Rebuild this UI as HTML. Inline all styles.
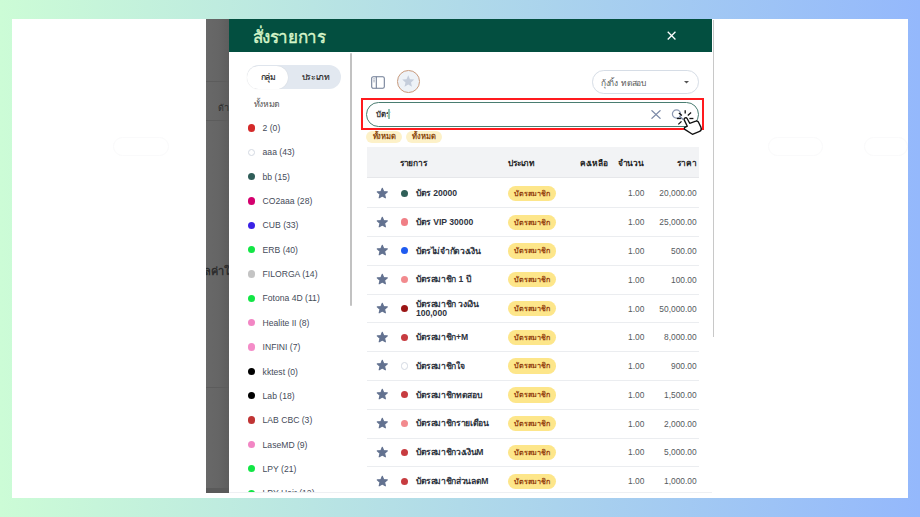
<!DOCTYPE html>
<html><head><meta charset="utf-8">
<style>
*{box-sizing:border-box;margin:0;padding:0}
html,body{width:920px;height:517px;overflow:hidden}
body{position:relative;background:linear-gradient(to right,#ccfcd6,#94b8fc);font-family:"Liberation Sans",sans-serif;}
.a{position:absolute}
.card{left:12px;top:19px;width:896px;height:479px;background:#fff}
.ov{left:206px;top:19px;width:23px;height:474px;background:linear-gradient(to right,#686868 0%,#656565 55%,#5d5d5d 100%);overflow:hidden}
.modal{left:229px;top:19px;width:483px;height:474px;background:#fff;overflow:hidden}
.hdr{left:0;top:0;width:483px;height:33px;background:#034f40}
.title{left:23.5px;top:6px;font-size:17px;-webkit-text-stroke:0.4px #d6f5c9;letter-spacing:-0.35px;color:#d6f5c9;line-height:26px;white-space:nowrap}
.tog{left:17.6px;top:46.1px;width:94px;height:24.3px;border-radius:12.2px;background:#e2e8f0}
.tog .w{left:0.6px;top:0.6px;width:41px;height:23.1px;border-radius:11.6px;background:#fff;box-shadow:0 0 1px rgba(0,0,0,.15)}
.tt{font-size:8.6px;-webkit-text-stroke:0.15px #222;color:#222;letter-spacing:-0.35px;line-height:12px;white-space:nowrap}
.si{font-size:8.6px;color:#454b59;line-height:12px;white-space:nowrap}
.dot{width:7.2px;height:7.2px;border-radius:50%}
.thumb{left:121px;top:34px;width:2.4px;height:253px;border-radius:1.2px;background:#c2c2c2}
.red{left:132px;top:78.7px;width:343.3px;height:32.2px;border:2px solid #ff1a1e}
.search{left:136.7px;top:82.7px;width:333.5px;height:24.9px;border:1.9px solid #4a7d71;border-radius:12.5px}
.tag{height:11.6px;width:35.5px;border-radius:6px;background:#fdf1c8;font-size:7.6px;font-weight:bold;color:#8b4a10;letter-spacing:-0.15px;text-align:center;line-height:11.6px;white-space:nowrap}
.th{left:137.5px;top:128.3px;width:332.1px;height:31.2px;background:#f2f3f5;border-bottom:1px solid #e6e7ea}
.hd{letter-spacing:-0.2px;font-size:8.4px;font-weight:bold;color:#1e1e1e;line-height:12px;white-space:nowrap}
.row{left:137.5px;width:332.1px;height:28.78px;border-bottom:1px solid #ebedf0}
.nm{font-size:8.6px;font-weight:bold;color:#2e3340;line-height:8.6px;white-space:nowrap}
.num{font-size:8.4px;color:#555a60;line-height:12px;white-space:nowrap;text-align:right}
.t{letter-spacing:-0.35px}
.badge{width:47.5px;height:15.3px;border-radius:7.7px;background:#fde68a;font-size:7.2px;font-weight:bold;color:#92400e;text-align:center;line-height:15.3px;white-space:nowrap}
</style></head><body>
<div class="a card"></div>
<div class="a" style="left:113px;top:137px;width:55.5px;height:19px;border-radius:9.5px;border:1.5px solid #fafafb"></div>
<div class="a" style="left:768px;top:137px;width:55px;height:19px;border-radius:9.5px;border:1.5px solid #fafafb"></div><div class="a" style="left:864px;top:137px;width:44px;height:19px;border-radius:9.5px;border:1.5px solid #fafafb"></div>
<div class="a ov">
  <div class="a" style="left:0;top:62px;width:23px;height:1px;background:#5c5c5c"></div>
  <div class="a" style="left:0;top:101px;width:23px;height:1px;background:#5c5c5c"></div>
  <div class="a" style="left:0;top:367.5px;width:23px;height:1px;background:#5c5c5c"></div>
  <div class="a" style="left:0;top:469px;width:23px;height:5px;background:#5a5a5a"></div>
  <div class="a" style="left:12px;top:82px;font-size:9px;color:#2c2c2c;white-space:nowrap">ด้านล่าง</div>
  <div class="a" style="left:-2px;top:243px;font-size:11px;font-weight:bold;color:#2c2c2c;white-space:nowrap">ลค่าใช้</div>
</div>
<div class="a" style="left:712.6px;top:19.6px;width:1.6px;height:317.5px;background:#c8c8c8"></div>
<div class="a modal">
  <div class="a hdr"></div>
  <div class="a title">สั่งรายการ</div>
  <svg class="a" style="left:438.3px;top:11.6px" width="9.2" height="9.2" viewBox="0 0 10 10"><path d="M0.8 0.8L9.2 9.2M9.2 0.8L0.8 9.2" stroke="#fff" stroke-width="1.4"/></svg>
  <div class="a tog"><div class="a w"></div>
    <div class="a tt" style="left:14px;top:6px">กลุ่ม</div>
    <div class="a tt" style="left:55px;top:6px">ประเภท</div>
  </div>
  <div class="a si" style="left:24.7px;top:79px;color:#555;font-size:8.6px"><span class="t">ทั้งหมด</span></div>
  <div class="a dot" style="left:18.70px;top:105.40px;background:#d42a2a;"></div>
  <div class="a si" style="left:33.6px;top:103.10px">2 (0)</div>
  <div class="a dot" style="left:18.70px;top:129.74px;background:#ffffff;border:1px solid #d3d9e2;"></div>
  <div class="a si" style="left:33.6px;top:127.44px">aaa (43)</div>
  <div class="a dot" style="left:18.70px;top:154.08px;background:#2f5d58;"></div>
  <div class="a si" style="left:33.6px;top:151.78px">bb (15)</div>
  <div class="a dot" style="left:18.70px;top:178.42px;background:#d4006e;"></div>
  <div class="a si" style="left:33.6px;top:176.12px">CO2aaa (28)</div>
  <div class="a dot" style="left:18.70px;top:202.76px;background:#3a22e6;"></div>
  <div class="a si" style="left:33.6px;top:200.46px">CUB (33)</div>
  <div class="a dot" style="left:18.70px;top:227.10px;background:#12e645;"></div>
  <div class="a si" style="left:33.6px;top:224.80px">ERB (40)</div>
  <div class="a dot" style="left:18.70px;top:251.44px;background:#c4c4c4;"></div>
  <div class="a si" style="left:33.6px;top:249.14px">FILORGA (14)</div>
  <div class="a dot" style="left:18.70px;top:275.78px;background:#12e645;"></div>
  <div class="a si" style="left:33.6px;top:273.48px">Fotona 4D (11)</div>
  <div class="a dot" style="left:18.70px;top:300.12px;background:#f286c4;"></div>
  <div class="a si" style="left:33.6px;top:297.82px">Healite II (8)</div>
  <div class="a dot" style="left:18.70px;top:324.46px;background:#f48cc8;"></div>
  <div class="a si" style="left:33.6px;top:322.16px">INFINI (7)</div>
  <div class="a dot" style="left:18.70px;top:348.80px;background:#000000;"></div>
  <div class="a si" style="left:33.6px;top:346.50px">kktest (0)</div>
  <div class="a dot" style="left:18.70px;top:373.14px;background:#000000;"></div>
  <div class="a si" style="left:33.6px;top:370.84px">Lab (18)</div>
  <div class="a dot" style="left:18.70px;top:397.48px;background:#c03434;"></div>
  <div class="a si" style="left:33.6px;top:395.18px">LAB CBC (3)</div>
  <div class="a dot" style="left:18.70px;top:421.82px;background:#f286c4;"></div>
  <div class="a si" style="left:33.6px;top:419.52px">LaseMD (9)</div>
  <div class="a dot" style="left:18.70px;top:446.16px;background:#12e645;"></div>
  <div class="a si" style="left:33.6px;top:443.86px">LPY (21)</div>
  <div class="a dot" style="left:18.70px;top:470.50px;background:#12e645;"></div>
  <div class="a si" style="left:33.6px;top:468.20px">LPY Hair (12)</div>
  <div class="a thumb"></div>
  <svg class="a" style="left:141.5px;top:56.5px" width="14" height="13" viewBox="0 0 14 13"><rect x="0.7" y="0.7" width="12.6" height="11.6" rx="1.6" fill="none" stroke="#6e7b94" stroke-width="1.05"/><path d="M5.3 0.7V12.3" stroke="#6e7b94" stroke-width="1.05"/><path d="M2.3 2.8H3.8M2.3 4.3H3.8M2.3 5.8H3.8" stroke="#8a96aa" stroke-width="0.8"/></svg>
  <div class="a" style="left:168.2px;top:51.2px;width:22.7px;height:22.7px;border-radius:50%;border:1.2px solid #c99a7c;background:#eef2f7"></div>
  <svg class="a" style="left:172.3px;top:55.4px" width="14.5" height="14.5" viewBox="0 0 24 24"><path fill="#c5cddb" d="M12 17.27L18.18 21l-1.64-7.03L22 9.24l-7.19-.61L12 2 9.19 8.63 2 9.24l5.46 4.73L5.82 21z"/></svg>
  <div class="a" style="left:363.4px;top:51px;width:106.2px;height:23.6px;border-radius:11.8px;border:1px solid #d6dde6"></div>
  <div class="a si" style="left:372px;top:58.3px;color:#555;font-size:8.4px;letter-spacing:-0.3px;word-spacing:1.5px">กุ้งกิ้ง ทดสอบ</div>
  <svg class="a" style="left:454.6px;top:61.8px" width="5" height="3" viewBox="0 0 5 3"><path d="M0 0H5L2.5 2.6Z" fill="#555"/></svg>
  <div class="a red"></div>
  <div class="a search"></div>
  <div class="a si" style="left:147px;top:90px;color:#3a3a3a;font-size:7.8px;font-weight:bold">บัตร</div>
  <div class="a" style="left:159.2px;top:90.2px;width:1.7px;height:9.6px;background:#8fc0b3"></div>
  <svg class="a" style="left:422px;top:91px" width="10" height="9" viewBox="0 0 10 9"><path d="M0.5 0.3L9.5 8.7M9.5 0.3L0.5 8.7" stroke="#7a88a6" stroke-width="1.2"/></svg>
  <svg class="a" style="left:442px;top:89px" width="14" height="14" viewBox="0 0 14 14"><circle cx="5.5" cy="6" r="4.1" fill="none" stroke="#8c98b2" stroke-width="1.2"/><path d="M8.5 8L12 11.5" stroke="#7a88a6" stroke-width="1.2"/></svg>
  <div class="a tag" style="left:137.4px;top:112.4px">ทั้งหมด</div>
  <div class="a tag" style="left:177.3px;top:112.4px">ทั้งหมด</div>
  <div class="a th"></div>
  <div class="a hd" style="left:170.9px;top:138.3px">รายการ</div>
  <div class="a hd" style="left:279.2px;top:138.3px">ประเภท</div>
  <div class="a hd" style="left:300px;top:138.3px;width:78.7px;text-align:right">คงเหลือ</div>
  <div class="a hd" style="left:340px;top:138.3px;width:74.9px;text-align:right">จำนวน</div>
  <div class="a hd" style="left:380px;top:138.3px;width:87.4px;text-align:right">ราคา</div>
  <div class="a row" style="top:160.50px"></div>
  <div class="a" style="left:146.60px;top:167.80px;line-height:0"><svg viewBox="-0.5 -0.5 25 25" width="12.6" height="12.6"><path fill="#637290" stroke="#637290" stroke-width="2.2" stroke-linejoin="round" d="M12 17.27L18.18 21l-1.64-7.03L22 9.24l-7.19-.61L12 2 9.19 8.63 2 9.24l5.46 4.73L5.82 21z"/></svg></div>
  <div class="a dot" style="left:171.90px;top:170.70px;background:#2f5f58;"></div>
  <div class="a nm" style="left:186.90px;top:170.10px"><span class="t">บัตร</span> 20000</div>
  <div class="a badge" style="left:279.10px;top:166.80px">บัตรสมาชิก</div>
  <div class="a num" style="left:350.00px;width:65.40px;top:168.40px">1.00</div>
  <div class="a num" style="left:380.00px;width:87.60px;top:168.40px">20,000.00</div>
  <div class="a row" style="top:189.28px"></div>
  <div class="a" style="left:146.60px;top:196.58px;line-height:0"><svg viewBox="-0.5 -0.5 25 25" width="12.6" height="12.6"><path fill="#637290" stroke="#637290" stroke-width="2.2" stroke-linejoin="round" d="M12 17.27L18.18 21l-1.64-7.03L22 9.24l-7.19-.61L12 2 9.19 8.63 2 9.24l5.46 4.73L5.82 21z"/></svg></div>
  <div class="a dot" style="left:171.90px;top:199.48px;background:#f07f86;"></div>
  <div class="a nm" style="left:186.90px;top:198.88px"><span class="t">บัตร</span> VIP 30000</div>
  <div class="a badge" style="left:279.10px;top:195.58px">บัตรสมาชิก</div>
  <div class="a num" style="left:350.00px;width:65.40px;top:197.18px">1.00</div>
  <div class="a num" style="left:380.00px;width:87.60px;top:197.18px">25,000.00</div>
  <div class="a row" style="top:218.06px"></div>
  <div class="a" style="left:146.60px;top:225.36px;line-height:0"><svg viewBox="-0.5 -0.5 25 25" width="12.6" height="12.6"><path fill="#637290" stroke="#637290" stroke-width="2.2" stroke-linejoin="round" d="M12 17.27L18.18 21l-1.64-7.03L22 9.24l-7.19-.61L12 2 9.19 8.63 2 9.24l5.46 4.73L5.82 21z"/></svg></div>
  <div class="a dot" style="left:171.90px;top:228.26px;background:#1f5bf0;"></div>
  <div class="a nm" style="left:186.90px;top:227.66px"><span class="t">บัตรไม่จำกัดวงเงิน</span></div>
  <div class="a badge" style="left:279.10px;top:224.36px">บัตรสมาชิก</div>
  <div class="a num" style="left:350.00px;width:65.40px;top:225.96px">1.00</div>
  <div class="a num" style="left:380.00px;width:87.60px;top:225.96px">500.00</div>
  <div class="a row" style="top:246.84px"></div>
  <div class="a" style="left:146.60px;top:254.14px;line-height:0"><svg viewBox="-0.5 -0.5 25 25" width="12.6" height="12.6"><path fill="#637290" stroke="#637290" stroke-width="2.2" stroke-linejoin="round" d="M12 17.27L18.18 21l-1.64-7.03L22 9.24l-7.19-.61L12 2 9.19 8.63 2 9.24l5.46 4.73L5.82 21z"/></svg></div>
  <div class="a dot" style="left:171.90px;top:257.04px;background:#f28a8e;"></div>
  <div class="a nm" style="left:186.90px;top:256.44px"><span class="t">บัตรสมาชิก</span> 1 <span class="t">ปี</span></div>
  <div class="a badge" style="left:279.10px;top:253.14px">บัตรสมาชิก</div>
  <div class="a num" style="left:350.00px;width:65.40px;top:254.74px">1.00</div>
  <div class="a num" style="left:380.00px;width:87.60px;top:254.74px">100.00</div>
  <div class="a row" style="top:275.62px"></div>
  <div class="a" style="left:146.60px;top:282.92px;line-height:0"><svg viewBox="-0.5 -0.5 25 25" width="12.6" height="12.6"><path fill="#637290" stroke="#637290" stroke-width="2.2" stroke-linejoin="round" d="M12 17.27L18.18 21l-1.64-7.03L22 9.24l-7.19-.61L12 2 9.19 8.63 2 9.24l5.46 4.73L5.82 21z"/></svg></div>
  <div class="a dot" style="left:171.90px;top:285.82px;background:#9b1515;"></div>
  <div class="a nm" style="left:186.90px;top:280.92px"><span class="t">บัตรสมาชิก</span> <span class="t">วงเงิน</span><br>100,000</div>
  <div class="a badge" style="left:279.10px;top:281.92px">บัตรสมาชิก</div>
  <div class="a num" style="left:350.00px;width:65.40px;top:283.52px">1.00</div>
  <div class="a num" style="left:380.00px;width:87.60px;top:283.52px">50,000.00</div>
  <div class="a row" style="top:304.40px"></div>
  <div class="a" style="left:146.60px;top:311.70px;line-height:0"><svg viewBox="-0.5 -0.5 25 25" width="12.6" height="12.6"><path fill="#637290" stroke="#637290" stroke-width="2.2" stroke-linejoin="round" d="M12 17.27L18.18 21l-1.64-7.03L22 9.24l-7.19-.61L12 2 9.19 8.63 2 9.24l5.46 4.73L5.82 21z"/></svg></div>
  <div class="a dot" style="left:171.90px;top:314.60px;background:#c73c40;"></div>
  <div class="a nm" style="left:186.90px;top:314.00px"><span class="t">บัตรสมาชิก</span>+M</div>
  <div class="a badge" style="left:279.10px;top:310.70px">บัตรสมาชิก</div>
  <div class="a num" style="left:350.00px;width:65.40px;top:312.30px">1.00</div>
  <div class="a num" style="left:380.00px;width:87.60px;top:312.30px">8,000.00</div>
  <div class="a row" style="top:333.18px"></div>
  <div class="a" style="left:146.60px;top:340.48px;line-height:0"><svg viewBox="-0.5 -0.5 25 25" width="12.6" height="12.6"><path fill="#637290" stroke="#637290" stroke-width="2.2" stroke-linejoin="round" d="M12 17.27L18.18 21l-1.64-7.03L22 9.24l-7.19-.61L12 2 9.19 8.63 2 9.24l5.46 4.73L5.82 21z"/></svg></div>
  <div class="a dot" style="left:171.90px;top:343.38px;background:#ffffff;border:1px solid #d3d9e2;"></div>
  <div class="a nm" style="left:186.90px;top:342.78px"><span class="t">บัตรสมาชิกใจ</span></div>
  <div class="a badge" style="left:279.10px;top:339.48px">บัตรสมาชิก</div>
  <div class="a num" style="left:350.00px;width:65.40px;top:341.08px">1.00</div>
  <div class="a num" style="left:380.00px;width:87.60px;top:341.08px">900.00</div>
  <div class="a row" style="top:361.96px"></div>
  <div class="a" style="left:146.60px;top:369.26px;line-height:0"><svg viewBox="-0.5 -0.5 25 25" width="12.6" height="12.6"><path fill="#637290" stroke="#637290" stroke-width="2.2" stroke-linejoin="round" d="M12 17.27L18.18 21l-1.64-7.03L22 9.24l-7.19-.61L12 2 9.19 8.63 2 9.24l5.46 4.73L5.82 21z"/></svg></div>
  <div class="a dot" style="left:171.90px;top:372.16px;background:#c73c40;"></div>
  <div class="a nm" style="left:186.90px;top:371.56px"><span class="t">บัตรสมาชิกทดสอบ</span></div>
  <div class="a badge" style="left:279.10px;top:368.26px">บัตรสมาชิก</div>
  <div class="a num" style="left:350.00px;width:65.40px;top:369.86px">1.00</div>
  <div class="a num" style="left:380.00px;width:87.60px;top:369.86px">1,500.00</div>
  <div class="a row" style="top:390.74px"></div>
  <div class="a" style="left:146.60px;top:398.04px;line-height:0"><svg viewBox="-0.5 -0.5 25 25" width="12.6" height="12.6"><path fill="#637290" stroke="#637290" stroke-width="2.2" stroke-linejoin="round" d="M12 17.27L18.18 21l-1.64-7.03L22 9.24l-7.19-.61L12 2 9.19 8.63 2 9.24l5.46 4.73L5.82 21z"/></svg></div>
  <div class="a dot" style="left:171.90px;top:400.94px;background:#f28a8e;"></div>
  <div class="a nm" style="left:186.90px;top:400.34px"><span class="t">บัตรสมาชิกรายเดือน</span></div>
  <div class="a badge" style="left:279.10px;top:397.04px">บัตรสมาชิก</div>
  <div class="a num" style="left:350.00px;width:65.40px;top:398.64px">1.00</div>
  <div class="a num" style="left:380.00px;width:87.60px;top:398.64px">2,000.00</div>
  <div class="a row" style="top:419.52px"></div>
  <div class="a" style="left:146.60px;top:426.82px;line-height:0"><svg viewBox="-0.5 -0.5 25 25" width="12.6" height="12.6"><path fill="#637290" stroke="#637290" stroke-width="2.2" stroke-linejoin="round" d="M12 17.27L18.18 21l-1.64-7.03L22 9.24l-7.19-.61L12 2 9.19 8.63 2 9.24l5.46 4.73L5.82 21z"/></svg></div>
  <div class="a dot" style="left:171.90px;top:429.72px;background:#c73c40;"></div>
  <div class="a nm" style="left:186.90px;top:429.12px"><span class="t">บัตรสมาชิกวงเงิน</span>M</div>
  <div class="a badge" style="left:279.10px;top:425.82px">บัตรสมาชิก</div>
  <div class="a num" style="left:350.00px;width:65.40px;top:427.42px">1.00</div>
  <div class="a num" style="left:380.00px;width:87.60px;top:427.42px">5,000.00</div>
  <div class="a row" style="top:448.30px"></div>
  <div class="a" style="left:146.60px;top:455.60px;line-height:0"><svg viewBox="-0.5 -0.5 25 25" width="12.6" height="12.6"><path fill="#637290" stroke="#637290" stroke-width="2.2" stroke-linejoin="round" d="M12 17.27L18.18 21l-1.64-7.03L22 9.24l-7.19-.61L12 2 9.19 8.63 2 9.24l5.46 4.73L5.82 21z"/></svg></div>
  <div class="a dot" style="left:171.90px;top:458.50px;background:#c73c40;"></div>
  <div class="a nm" style="left:186.90px;top:457.90px"><span class="t">บัตรสมาชิกส่วนลด</span>M</div>
  <div class="a badge" style="left:279.10px;top:454.60px">บัตรสมาชิก</div>
  <div class="a num" style="left:350.00px;width:65.40px;top:456.20px">1.00</div>
  <div class="a num" style="left:380.00px;width:87.60px;top:456.20px">1,000.00</div>
  <div class="a" style="left:0;top:473px;width:483px;height:1px;background:#eef0f3"></div>
</div>
<svg class="a" style="left:672px;top:105px" width="34" height="34" viewBox="0 0 34 34">
 <g stroke="#111" stroke-width="1.3" stroke-linecap="butt">
  <path d="M13.2 5.3V8.6"/><path d="M15.8 10.5L19.1 7.6"/><path d="M17.4 13.5H21.4"/><path d="M6.9 7.9L9.9 10.5"/><path d="M4.9 13.5H8.9"/><path d="M6.3 19.4L9.5 16.4"/>
 </g>
 <path d="M13.2 12.8C12.2 13.2 11.8 14.2 12.3 15.1L15.3 21.2L12.9 22.4C12.2 22.8 12.2 23.8 12.8 24.4L20.4 29.3L27.6 26.4C29.4 25.4 29.5 23.6 29 22.4L26.5 17.2C26 16.3 24.8 15.8 23.8 16.2L17.7 18.3L15.1 13.5C14.7 12.8 13.9 12.6 13.2 12.8Z" fill="#fff" stroke="#111" stroke-width="1.35" stroke-linejoin="round"/>
</svg>
</body></html>
